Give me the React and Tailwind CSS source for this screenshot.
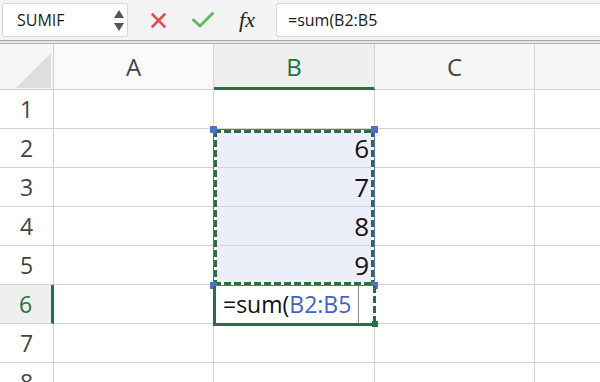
import React from "react";

const rows = [1, 2, 3, 4, 5, 6, 7, 8];
const values = { 2: "6", 3: "7", 4: "8", 5: "9" };

const font = { fontFamily: '"Open Sans", "Noto Sans", sans-serif' };

function Toolbar() {
	return (
		<div className="h-[40px] bg-[#f3f3f3] flex items-center">
			{/* name box */}
			<div className="ml-[2px] w-[126px] h-[34px] bg-white border border-[#d6d6d6] rounded-[3px] flex items-center pl-[14px] pr-[3px]">
				<span className="text-[16px] text-[#1a1a1a] flex-1">SUMIF</span>
				<div className="flex flex-col items-center gap-[5px]">
					<svg width="10" height="8" viewBox="0 0 10 8">
						<path d="M5 0 L10 8 L0 8 Z" fill="#555" />
					</svg>
					<svg width="10" height="8" viewBox="0 0 10 8">
						<path d="M0 0 L10 0 L5 8 Z" fill="#555" />
					</svg>
				</div>
			</div>
			{/* cancel */}
			<div className="w-[60px] flex justify-center">
				<svg width="15" height="15" viewBox="0 0 15 15">
					<path d="M1.5 1.5 L13.5 13.5 M13.5 1.5 L1.5 13.5" stroke="#d9534f" strokeWidth="2.6" strokeLinecap="round" />
				</svg>
			</div>
			{/* enter */}
			<div className="w-[30px] flex justify-center">
				<svg width="22" height="16" viewBox="0 0 22 16">
					<path d="M1.5 8 L8 14 L20.5 1.5" stroke="#5cb85c" strokeWidth="2.8" fill="none" strokeLinecap="round" strokeLinejoin="round" />
				</svg>
			</div>
			<div className="w-[58px] flex justify-center">
				<span
					className="text-[22px] italic text-[#222] leading-none"
					style={{ fontFamily: '"Liberation Serif", "DejaVu Serif", serif' }}
				>
					fx
				</span>
			</div>
			{/* formula input */}
			<div className="flex-1 h-[34px] bg-white border border-[#d6d6d6] rounded-l-[3px] border-r-0 flex items-center pl-[11px]">
				<span className="text-[16px] text-[#1a1a1a]">=sum(B2:B5</span>
			</div>
		</div>
	);
}

function Dash({ dir }) {
	// marching ants: green dashes with white gaps
	const horizontal = dir === "h";
	return (
		<div
			className={horizontal ? "h-[3px] w-full" : "w-[3px] h-full"}
			style={{
				backgroundImage: `repeating-linear-gradient(${horizontal ? "90deg" : "180deg"}, #2f6b45 0 7px, #ffffff 7px 10px)`,
			}}
		/>
	);
}

export default function App() {
	return (
		<div className="w-[600px] h-[382px] overflow-hidden bg-white relative" style={font}>
			<Toolbar />
			<div className="h-[1px] bg-[#a9a9a9]" />
			<div className="h-[2px] bg-[#e4e4e4]" />
			<div className="h-[1px] bg-[#b5b5b5]" />

			<div className="grid grid-cols-[54px_160px_161px_160px_1fr] grid-rows-[46px_repeat(8,39px)]">
				{/* header row */}
				<div className="bg-[#f6f6f6] border-r border-b border-[#cfcfcf] relative">
					<div className="absolute left-[16px] top-[9px] w-[35px] h-[35px] bg-[#dedede] [clip-path:polygon(100%_0,100%_100%,0_100%)]" />
				</div>
				<div className="bg-[#fafafa] border-r border-b border-[#d4d4d4] flex items-center justify-center text-[24px] text-[#444]">
					A
				</div>
				<div className="bg-[#efefef] border-r border-[#d4d4d4] border-b-[3px] border-b-[#217346] flex items-center justify-center text-[24px] text-[#217346] pt-[2px]">
					B
				</div>
				<div className="bg-[#f6f6f6] border-r border-b border-[#d4d4d4] flex items-center justify-center text-[24px] text-[#444]">
					C
				</div>
				<div className="bg-[#f6f6f6] border-b border-[#d4d4d4]" />

				{rows.map((r) => (
					<React.Fragment key={r}>
						<div
							className={`border-b border-[#d4d4d4] flex items-center justify-center text-[23px] ${
								r === 6
									? "bg-[#efefef] text-[#217346] border-r-[3px] border-r-[#217346]"
									: "bg-white text-[#444] border-r border-r-[#cfcfcf]"
							}`}
						>
							{r}
						</div>
						<div className="border-r border-b border-[#d4d4d4]" />
						<div
							className={`border-r border-b border-[#d4d4d4] flex items-center justify-end pr-[5px] text-[26px] text-[#111] ${
								values[r] ? "bg-[#eceef9]" : ""
							}`}
						>
							{values[r] || ""}
						</div>
						<div className="border-r border-b border-[#d4d4d4]" />
						<div className="border-b border-[#d4d4d4]" />
					</React.Fragment>
				))}
			</div>

			{/* range reference B2:B5 */}
			<div className="absolute left-[213px] top-[129px] w-[162px] h-[157px] border border-[#4a72c9] pointer-events-none">
				<div className="absolute left-0 right-0 top-0">
					<Dash dir="h" />
				</div>
				<div className="absolute left-0 right-0 bottom-0">
					<Dash dir="h" />
				</div>
				<div className="absolute top-0 bottom-0 left-0">
					<Dash dir="v" />
				</div>
				<div className="absolute top-0 bottom-0 right-0">
					<Dash dir="v" />
				</div>
				<div className="absolute -left-[4px] -top-[4px] w-[7px] h-[7px] bg-[#4a72c9]" />
				<div className="absolute -right-[4px] -top-[4px] w-[7px] h-[7px] bg-[#4a72c9]" />
				<div className="absolute -left-[4px] -bottom-[4px] w-[7px] h-[7px] bg-[#4a72c9]" />
				<div className="absolute -right-[4px] -bottom-[4px] w-[7px] h-[7px] bg-[#4a72c9]" />
			</div>

			{/* active editing cell B6 */}
			<div className="absolute left-[213px] top-[286px] w-[162px] h-[40px] border-l-[3px] border-b-[3px] border-[#217346] bg-white flex items-center">
				<span className="pl-[7px] text-[23px] text-[#111] leading-none">
					=sum(<span className="text-[#3f63c4]">B2:B5</span>
				</span>
				<div className="absolute left-[142px] top-0 bottom-0 w-[1px] bg-[#8a8a8a]" />
				<div className="absolute -right-[1px] top-0 bottom-0">
					<Dash dir="v" />
				</div>
				<div className="absolute -right-[3px] -bottom-[4px] w-[6px] h-[6px] bg-[#217346]" />
			</div>
		</div>
	);
}
